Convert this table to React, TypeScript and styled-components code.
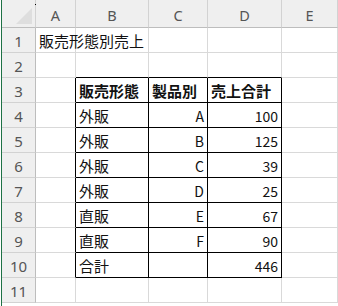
import React from "react";
import styled, { createGlobalStyle } from "styled-components";

const Global = createGlobalStyle`
  html, body { margin: 0; padding: 0; background: #ffffff; }
  body { font-family: "Noto Sans CJK JP", "Liberation Sans", sans-serif; }
`;

const Sheet = styled.div`
  width: 338px;
  height: 306px;
  overflow: hidden;
  box-sizing: border-box;
  padding-left: 1px;
  position: relative;
`;

const Grid = styled.div`
  display: grid;
  grid-template-columns: 34px 40px 73px 59px 74px 1fr;
  grid-template-rows: 28px repeat(11, 25px);
  border-left: 1px solid #1e7145;
  height: 306px;
`;

const HeadCell = styled.div`
  box-sizing: border-box;
  background: #efefef;
  border-right: 1px solid #d2d2d2;
  border-bottom: 1px solid #bdbdbd;
  color: #555555;
  font-family: "Noto Sans", "Liberation Sans", sans-serif;
  font-size: 14.5px;
  display: flex;
  align-items: center;
  justify-content: center;
  padding-top: 2px;
  position: relative;
`;

const Triangle = styled.div`
  position: absolute;
  right: 3px;
  bottom: 3px;
  width: 0;
  height: 0;
  border-left: 16px solid transparent;
  border-bottom: 16px solid #dedede;
`;

const RowNum = styled.div`
  box-sizing: border-box;
  background: #efefef;
  border-right: 1px solid #bdbdbd;
  border-bottom: 1px solid #d2d2d2;
  color: #555555;
  font-family: "Noto Sans", "Liberation Sans", sans-serif;
  font-size: 15px;
  display: flex;
  align-items: center;
  justify-content: center;
  padding-top: 1px;
`;

const Cell = styled.div<{
  $rightDark?: boolean;
  $bottomDark?: boolean;
  $align?: "left" | "right";
  $bold?: boolean;
  $num?: boolean;
}>`
  box-sizing: border-box;
  border-right: 1px solid ${(p) => (p.$rightDark ? "#000000" : "#d9d9d9")};
  border-bottom: 1px solid ${(p) => (p.$bottomDark ? "#000000" : "#d9d9d9")};
  color: #111111;
  font-family: "Noto Sans CJK JP", "Liberation Sans", sans-serif;
  font-size: ${(p) => (p.$num ? "14px" : "15px")};
  font-weight: ${(p) => (p.$bold ? 700 : 400)};
  display: flex;
  align-items: center;
  justify-content: ${(p) => (p.$align === "right" ? "flex-end" : "flex-start")};
  padding: 1px 3px 0 3px;
  white-space: nowrap;
`;

const Dot = styled.div`
  position: absolute;
  left: 35px;
  top: 4px;
  width: 1px;
  height: 1px;
  background: #000;
`;

const cols = ["A", "B", "C", "D", "E"];

const data: [string, string, string][] = [
  ["外販", "A", "100"],
  ["外販", "B", "125"],
  ["外販", "C", "39"],
  ["外販", "D", "25"],
  ["直販", "E", "67"],
  ["直販", "F", "90"],
  ["合計", "", "446"],
];

export default function App() {
  const rows: React.ReactNode[] = [];

  rows.push(
    <React.Fragment key="r1">
      <RowNum>1</RowNum>
      <Cell>販売形態別売上</Cell>
      <Cell />
      <Cell />
      <Cell />
      <Cell />
    </React.Fragment>
  );
  rows.push(
    <React.Fragment key="r2">
      <RowNum>2</RowNum>
      <Cell />
      <Cell $bottomDark />
      <Cell $bottomDark />
      <Cell $bottomDark />
      <Cell />
    </React.Fragment>
  );
  rows.push(
    <React.Fragment key="r3">
      <RowNum>3</RowNum>
      <Cell $rightDark />
      <Cell $rightDark $bottomDark $bold>販売形態</Cell>
      <Cell $rightDark $bottomDark $bold>製品別</Cell>
      <Cell $rightDark $bottomDark $bold>売上合計</Cell>
      <Cell />
    </React.Fragment>
  );
  data.forEach(([kind, prod, total], i) => {
    rows.push(
      <React.Fragment key={`d${i}`}>
        <RowNum>{i + 4}</RowNum>
        <Cell $rightDark />
        <Cell $rightDark $bottomDark>{kind}</Cell>
        <Cell $rightDark $bottomDark $align="right" $num>{prod}</Cell>
        <Cell $rightDark $bottomDark $align="right" $num>{total}</Cell>
        <Cell />
      </React.Fragment>
    );
  });
  rows.push(
    <React.Fragment key="r11">
      <RowNum>11</RowNum>
      <Cell />
      <Cell />
      <Cell />
      <Cell />
      <Cell />
    </React.Fragment>
  );

  return (
    <>
      <Global />
      <Sheet>
        <Grid>
          <HeadCell>
            <Triangle />
          </HeadCell>
          {cols.map((c) => (
            <HeadCell key={c}>{c}</HeadCell>
          ))}
          {rows}
        </Grid>
        <Dot />
      </Sheet>
    </>
  );
}
